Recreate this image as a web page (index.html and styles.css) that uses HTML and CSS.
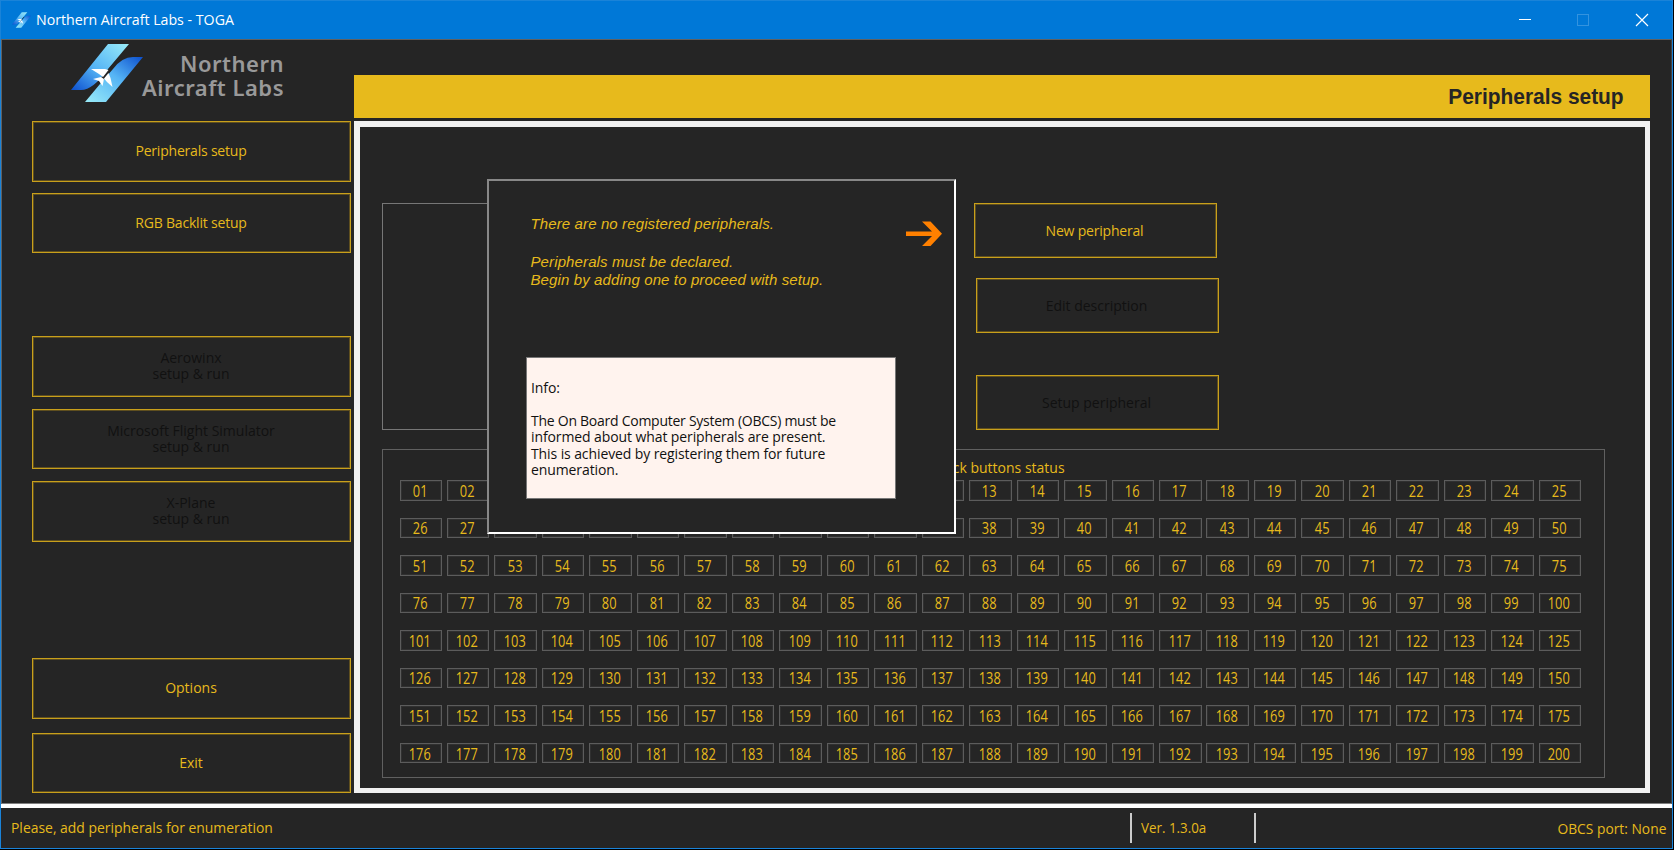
FILE: index.html
```html
<!DOCTYPE html>
<html lang="en">
<head>
<meta charset="utf-8">
<title>Northern Aircraft Labs - TOGA</title>
<link rel="stylesheet" href="styles.css">
</head>
<body>
<div class="window">
  <header class="titlebar">
    <svg class="app-icon" viewBox="0 0 72 58"><use href="#mark"/></svg>
    <span class="caption">Northern Aircraft Labs - TOGA</span>
    <svg class="controls" width="130" height="14" viewBox="0 0 130 14">
      <path d="M0 6.5h12" stroke="#fff" fill="none"/>
      <rect x="58.5" y="1.5" width="11" height="11" stroke="#3393df" fill="none"/>
      <path d="M117 1l12 12M129 1l-12 12" stroke="#fff" stroke-width="1.2" fill="none"/>
    </svg>
  </header>
  <main class="client">
    <aside class="sidebar">
      <div class="brand">
        <svg class="logo" width="72" height="58" viewBox="0 0 72 58">
          <defs>
            <linearGradient id="top" x1="0" y1="1" x2="1" y2="0"><stop offset="0" stop-color="#0c4fce"/><stop offset=".45" stop-color="#55b4f5"/><stop offset="1" stop-color="#9aecf8"/></linearGradient>
            <linearGradient id="bottom" x1="0" y1="1" x2="1" y2="0"><stop offset="0" stop-color="#9aecf8"/><stop offset=".55" stop-color="#55b4f5"/><stop offset="1" stop-color="#0c4fce"/></linearGradient>
          </defs>
          <g id="mark">
            <path d="M37 0H58L37 25Q22 46 10 46H0Z" fill="url(#top)"/>
            <path d="M14 58H35L72 13H62Q51 13 42 25L29 40Z" fill="url(#bottom)"/>
            <path d="M45 18L31 35" stroke="#252525" stroke-width="2.500"/>
            <path d="M20 25H34L37.500 26L32 33L28 30Z" fill="#fff"/>
            <path d="M37.500 29L39.500 34L41.500 43L36 38L33 34.500Z" fill="#fff"/>
            <path d="M22 35L30 33L33 35L31.500 42L28 37Z" fill="#fff"/>
          </g>
        </svg>
        <div class="brand-name"><div>Northern</div><div>Aircraft Labs</div></div>
      </div>
      <button class="btn snug"><span>Peripherals setup</span></button>
      <button class="btn rgb snug"><span>RGB Backlit setup</span></button>
      <button class="btn aero off"><span>Aerowinx<br>setup &amp; run</span></button>
      <button class="btn msfs off"><span>Microsoft Flight Simulator<br>setup &amp; run</span></button>
      <button class="btn xplane off"><span>X-Plane<br>setup &amp; run</span></button>
      <button class="btn options"><span>Options</span></button>
      <button class="btn exit"><span>Exit</span></button>
    </aside>
    <section class="work">
      <h1 class="band"><span>Peripherals setup</span></h1>
      <div class="panel">
        <div class="upper">
          <div class="list"></div>
          <div class="actions">
            <button class="btn act snug"><span>New peripheral</span></button>
            <button class="btn act edit off"><span>Edit description</span></button>
            <button class="btn act setup off"><span>Setup peripheral</span></button>
          </div>
        </div>
        <div class="group">
          <div class="group-title">Joystick buttons status</div>
          <div class="grid" id="grid"></div>
        </div>
      </div>
    </section>
  </main>
  <footer class="status">
    <div class="message"><span>Please, add peripherals for enumeration</span></div>
    <div class="version"><span>Ver. 1.3.0a</span></div>
    <div class="port"><span>OBCS port: None</span></div>
  </footer>
  <div class="dialog">
    <div class="notice"><div class="n1">There are no registered peripherals.</div><div class="n2">Peripherals must be declared.</div><div class="n3">Begin by adding one to proceed with setup.</div></div>
    <svg class="arrow" width="36" height="26" viewBox="0 0 36 26"><path d="M0 10.500H26L16 .500H24.500L36 12.700L24.500 25H16L26 15H0Z" fill="#ff8000"/></svg>
    <div class="info"><p>Info:</p><p><span class="tight">The On Board Computer System (OBCS) must be</span><br>informed about what peripherals are present.<br>This is achieved by registering them for future<br>enumeration.</p></div>
  </div>
</div>
<script src="grid.js"></script>
</body>
</html>
```
FILE: grid.js
```js
const grid = document.getElementById('grid');
for (let i = 1; i <= 200; i++) {
  const cell = document.createElement('div');
  cell.className = 'cell';
  const label = document.createElement('span');
  label.textContent = String(i).padStart(2, '0');
  cell.append(label);
  grid.append(cell);
}
```
FILE: styles.css
```css
* { box-sizing: border-box; }
body { margin: 0; background: #000; font: 14px/16px "Open Sans", "Noto Sans", sans-serif; color: #e7ba1c; overflow: hidden; }
.window { position: relative; width: 1673px; height: 849px; border: 1px solid #1a83d8; background: #252525; display: flex; flex-direction: column; }
.titlebar { height: 38px; flex: none; background: #0078d7; display: flex; align-items: center; padding: 0 23px 1px 11px; color: #fff; }
.app-icon { width: 19px; height: 16px; }
.caption { font-size: 15px; margin: 0 0 2px 5px; display: inline-block; transform-origin: 0 50%; transform: scaleX(.945); }
.controls { margin-left: auto; }
.client { height: 765px; flex: none; display: flex; border: 1px solid #606060; border-right-color: #444; border-bottom-color: #808080; }
.sidebar { width: 352px; padding-left: 30px; display: flex; flex-direction: column; }
.brand { height: 81px; flex: none; padding: 4px 0 0 39px; display: flex; }
.brand-name { width: 141px; padding-top: 8px; display: flex; flex-direction: column; align-items: flex-end; color: #999; font: 600 22px/23.500px "Noto Sans", "Open Sans", sans-serif; letter-spacing: .5px; white-space: nowrap; }
.btn { display: flex; align-items: center; justify-content: center; width: 319px; height: 60.500px; flex: none; padding: 0 1px 0 0; border: 1px solid #c9a01b; box-shadow: inset 0 0 0 1px #5f4f1f; background: #252525; color: #e7ba1c; font: inherit; text-align: center; }
.snug { letter-spacing: -.2px; }
.off { color: #111; }
.rgb { margin-top: 11px; }
.aero { margin-top: 83px; }
.msfs, .xplane { margin-top: 12px; }
.options { margin-top: 116.500px; }
.exit { margin-top: 14px; }
.work { width: 1296px; padding-top: 35px; }
.band { height: 43px; margin: 0 0 3px; background: #e7ba1c; color: #252525; display: flex; align-items: center; justify-content: flex-end; padding-right: 26px; font: 700 22px/24px "Liberation Sans", sans-serif; }
.band span { transform-origin: 100% 50%; transform: scaleX(.95); }
.panel { height: 672px; border: solid #f0f0f0; border-width: 6px 5px 5px 6px; padding: 76px 0 0 21.500px; }
.upper { display: flex; height: 246px; }
.list { width: 400px; height: 227px; border: 1px solid #777; }
.actions { margin-left: 192px; }
.act { width: 243px; height: 55px; }
.edit, .setup { margin-left: 2px; }
.edit { margin-top: 20px; }
.setup { margin-top: 42px; }
.group { width: 1223px; height: 329px; border: 1px solid #606060; padding: 10px 0 0 17px; }
.group-title { height: 20px; padding-right: 20px; text-align: center; }
.grid { display: grid; grid-template-columns: repeat(25, 42.500px); grid-auto-rows: 20.500px; column-gap: 4.980px; row-gap: 17.050px; }
.cell { border: 1px solid #5c5c5c; box-shadow: inset 0 0 0 1px #303030; display: flex; align-items: center; justify-content: center; padding: 1px 2px 0 0; font-size: 16px; }
.cell span { transform: scaleX(.8); }
.status { flex: 1; border-top: 4px solid #fff; display: flex; align-items: center; font-size: 15px; }
.status span { display: inline-block; transform-origin: 0 50%; }
.message { width: 1129px; padding: 0 0 2px 10px; }
.message span { transform: scaleX(.928); }
.version { width: 126px; height: 30px; border: solid #ccc; border-width: 0 2px; padding: 6px 0 0 9px; }
.version span { transform: scaleX(.89); }
.port { margin-left: auto; padding-right: 6px; }
.port span { transform-origin: 100% 50%; transform: scaleX(.92); }
.dialog { position: absolute; left: 486px; top: 178px; width: 469px; height: 355px; border: 2px solid; border-color: #888 #fff #fff #888; background: #252525; }
.notice { padding: 34px 0 0 41.500px; height: 176px; font: italic 15px/18.800px "Liberation Sans", sans-serif; letter-spacing: .12px; white-space: nowrap; }
.n2 { margin-top: 18.800px; }
.arrow { position: absolute; left: 417px; top: 40px; }
.info { margin-left: 37px; width: 370px; height: 142px; padding: 22px 0 0 4px; border: 1px solid #777; background: #fff3ee; color: #111; letter-spacing: -.1px; white-space: nowrap; }
.info p { margin: 0 0 17px; line-height: 16.200px; }
.tight { letter-spacing: -.26px; }
```
